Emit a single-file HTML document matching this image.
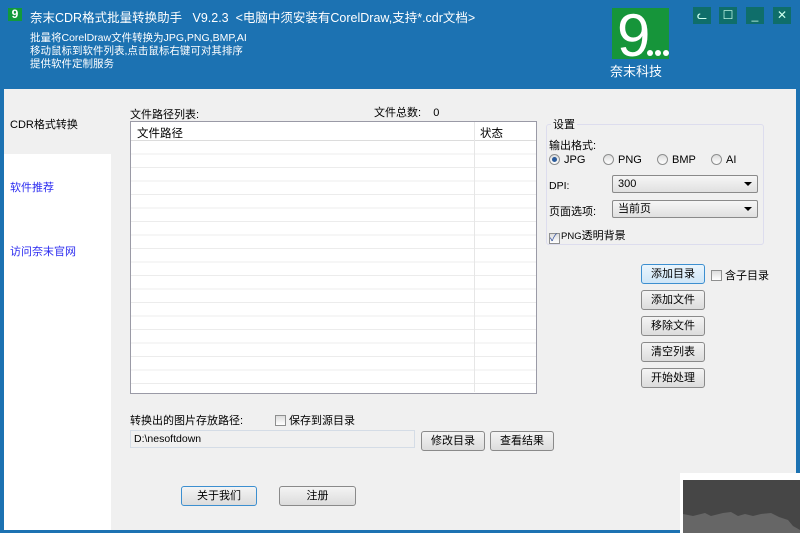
<!DOCTYPE html>
<html><head><meta charset="utf-8"><style>
*{margin:0;padding:0;box-sizing:border-box}
body{width:800px;height:533px;overflow:hidden;background:#1c72b2;font-family:"Liberation Sans","Noto Sans CJK SC",sans-serif;font-size:11px;color:#000;position:relative}
.a{position:absolute}
.hd{color:#fff}
.btn{position:absolute;height:20px;border:1px solid #8a8a8a;border-radius:3px;background:linear-gradient(#f4f4f4,#dcdcdc);text-align:center;line-height:18px;font-size:11px}
.cb{display:inline-block;width:11px;height:11px;border:1px solid #8e8f8f;background:linear-gradient(#ddd,#fff);vertical-align:-2px;margin-right:3px}
.rd{display:inline-block;width:11px;height:11px;border:1px solid #8e8f8f;border-radius:50%;background:linear-gradient(#ddd,#fff);vertical-align:-2px;margin-right:4px;position:relative}
.sel{position:absolute;height:18px;border:1px solid #8a8a8a;border-radius:2px;background:linear-gradient(#f6f6f6,#e0e0e0);line-height:16px;padding-left:5px}
.sel:after{content:"";position:absolute;right:5px;top:6px;border:4px solid transparent;border-top:4px solid #000}
.wb{position:absolute;top:7px;width:18px;height:17px;background:#0f6e6a;color:#cfe;text-align:center;line-height:17px;font-size:12px}
</style></head><body>
<div class="a" style="left:8px;top:8px;width:14px;height:13px;background:#129a3a;color:#fff;font-weight:bold;font-size:12px;line-height:13px;text-align:center">9</div>
<div class="a hd" style="left:30px;top:7px;font-size:12.5px">奈末CDR格式批量转换助手&nbsp;&nbsp;&nbsp;V9.2.3&nbsp;&nbsp;&lt;电脑中须安装有CorelDraw,支持*.cdr文档&gt;</div>
<div class="a hd" style="left:30px;top:32px;line-height:13px;font-size:10.5px">批量将CorelDraw文件转换为JPG,PNG,BMP,AI<br>移动鼠标到软件列表,点击鼠标右键可对其排序<br>提供软件定制服务</div>
<div class="a" style="left:612px;top:8px;width:57px;height:51px;background:#16953a;overflow:hidden">
<div class="a" style="left:5px;top:-2px;color:#fff;font-size:60px;line-height:60px;font-family:'Liberation Sans',sans-serif">9</div>
<div class="a" style="left:35px;top:42px;width:6px;height:6px;border-radius:50%;background:#fff"></div>
<div class="a" style="left:43px;top:42px;width:6px;height:6px;border-radius:50%;background:#fff"></div>
<div class="a" style="left:51px;top:42px;width:6px;height:6px;border-radius:50%;background:#fff"></div>
</div>
<div class="a hd" style="left:610px;top:61px;font-size:13px">奈末科技</div>
<div class="wb" style="left:693px">ᓚ</div>
<div class="wb" style="left:719px">☐</div>
<div class="wb" style="left:746px">_</div>
<div class="wb" style="left:773px">✕</div>

<div class="a" style="left:4px;top:89px;width:792px;height:441px;background:#f0f0f0"></div>
<div class="a" style="left:4px;top:154px;width:107px;height:376px;background:#fff"></div>
<div class="a" style="left:10px;top:116px">CDR格式转换</div>
<div class="a" style="left:10px;top:179px;color:#2b2bf0">软件推荐</div>
<div class="a" style="left:10px;top:243px;color:#2b2bf0">访问奈末官网</div>

<div class="a" style="left:130px;top:106px">文件路径列表:</div>
<div class="a" style="left:374px;top:104px">文件总数:&nbsp;&nbsp;&nbsp;&nbsp;0</div>
<div class="a" style="left:130px;top:121px;width:407px;height:273px;border:1px solid #9a9aa6;background:#fff repeat-y;background-image:repeating-linear-gradient(#fff 0,#fff 12.5px,#ececec 12.5px,#ececec 13.5px);background-position:0 19px"></div>
<div class="a" style="left:131px;top:122px;width:405px;height:19px;background:#fff;border-bottom:1px solid #dcdcdc"></div>
<div class="a" style="left:474px;top:122px;width:1px;height:270px;background:#e6e6e6"></div>
<div class="a" style="left:137px;top:125px;font-size:11.5px">文件路径</div>
<div class="a" style="left:480px;top:125px;font-size:11.5px">状态</div>

<div class="a" style="left:546px;top:124px;width:218px;height:121px;border:1px solid #dde;border-radius:3px"></div>
<div class="a" style="left:551px;top:116px;background:#f0f0f0;padding:0 2px">设置</div>
<div class="a" style="left:549px;top:137px">输出格式:</div>
<div class="a" style="left:549px;top:154px"><span class="rd"><span class="a" style="left:2px;top:2px;width:5px;height:5px;border-radius:50%;background:#2a5a9a"></span></span>JPG</div>
<div class="a" style="left:603px;top:154px"><span class="rd"></span>PNG</div>
<div class="a" style="left:657px;top:154px"><span class="rd"></span>BMP</div>
<div class="a" style="left:711px;top:154px"><span class="rd"></span>AI</div>
<div class="a" style="left:549px;top:180px;font-size:10.5px">DPI:</div>
<div class="sel" style="left:612px;top:175px;width:146px">300</div>
<div class="a" style="left:549px;top:203px">页面选项:</div>
<div class="sel" style="left:612px;top:200px;width:146px">当前页</div>
<div class="a" style="left:549px;top:227px"><span class="cb" style="margin-right:1px;font-size:10px;line-height:9px;color:#2a4a9a">✓</span><span style="font-size:9.5px">PNG</span>透明背景</div>

<div class="btn" style="left:641px;top:264px;width:64px;border-color:#3c8fd0;background:linear-gradient(#eaf5fd,#cfe6f7)">添加目录</div>
<div class="a" style="left:711px;top:267px"><span class="cb"></span>含子目录</div>
<div class="btn" style="left:641px;top:290px;width:64px">添加文件</div>
<div class="btn" style="left:641px;top:316px;width:64px">移除文件</div>
<div class="btn" style="left:641px;top:342px;width:64px">清空列表</div>
<div class="btn" style="left:641px;top:368px;width:64px">开始处理</div>

<div class="a" style="left:130px;top:412px">转换出的图片存放路径:</div>
<div class="a" style="left:275px;top:412px"><span class="cb"></span>保存到源目录</div>
<div class="a" style="left:130px;top:430px;width:285px;height:18px;border:1px solid #d4dce6;background:#f0f0f0;padding-left:3px;line-height:16px;font-size:10.5px">D:\nesoftdown</div>
<div class="btn" style="left:421px;top:431px;width:64px">修改目录</div>
<div class="btn" style="left:490px;top:431px;width:64px">查看结果</div>
<div class="btn" style="left:181px;top:486px;width:76px;border-color:#3c8fd0">关于我们</div>
<div class="btn" style="left:279px;top:486px;width:77px">注册</div>

<div class="a" style="left:680px;top:473px;width:120px;height:60px;background:#fff"></div>
<div class="a" style="left:683px;top:480px;width:117px;height:53px;background:#464646;overflow:hidden">
<svg width="117" height="53" style="position:absolute;left:0;top:0"><path d="M0 34 L10 36 L22 33 L28 36 L40 33 L48 32 L55 36 L62 34 L70 36 L78 34 L88 33 L96 37 L105 40 L110 46 L117 50 L117 53 L0 53Z" fill="#666"/></svg>
</div>
</body></html>
